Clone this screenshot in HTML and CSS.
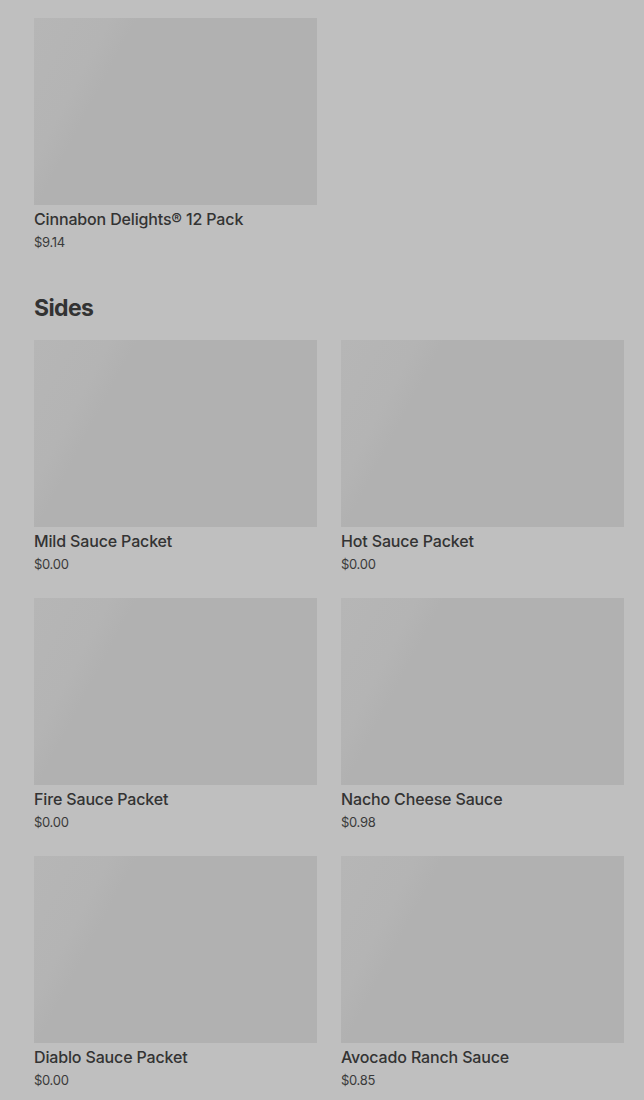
FILE: index.html
```html
<!DOCTYPE html>
<html lang="en">
<head>
<meta charset="utf-8">
<title>Menu</title>
<link rel="stylesheet" href="styles.css">
</head>
<body>
<main class="menu">
  <section class="section">
    <div class="grid">
      <div class="item">
        <div class="thumb"></div>
        <div class="name">Cinnabon Delights® 12 Pack</div>
        <div class="price">$9.14</div>
      </div>
    </div>
  </section>
  <section class="section">
    <h2 class="section-title">Sides</h2>
    <div class="grid">
      <div class="item">
        <div class="thumb"></div>
        <div class="name">Mild Sauce Packet</div>
        <div class="price">$0.00</div>
      </div>
      <div class="item">
        <div class="thumb"></div>
        <div class="name">Hot Sauce Packet</div>
        <div class="price">$0.00</div>
      </div>
      <div class="item">
        <div class="thumb"></div>
        <div class="name">Fire Sauce Packet</div>
        <div class="price">$0.00</div>
      </div>
      <div class="item">
        <div class="thumb"></div>
        <div class="name">Nacho Cheese Sauce</div>
        <div class="price">$0.98</div>
      </div>
      <div class="item">
        <div class="thumb"></div>
        <div class="name">Diablo Sauce Packet</div>
        <div class="price">$0.00</div>
      </div>
      <div class="item">
        <div class="thumb"></div>
        <div class="name">Avocado Ranch Sauce</div>
        <div class="price">$0.85</div>
      </div>
    </div>
  </section>
</main>
</body>
</html>
```
FILE: styles.css
```css
html, body {
  margin: 0;
  padding: 0;
  background: #bfbfbf;
}
body {
  font-family: Inter, "Liberation Sans", Arial, sans-serif;
  color: #333333;
}
.menu {
  padding: 18px 20px 0 34px;
}
.section + .section {
  margin-top: 42px;
}
.section-title {
  margin: 0 0 18px 0;
  font-size: 23px;
  line-height: 28px;
  font-weight: 700;
  letter-spacing: -0.6px;
  color: #333333;
}
.grid {
  display: grid;
  grid-template-columns: 283px 283px;
  column-gap: 24px;
  row-gap: 24px;
}
.item {
  height: 234px;
}
.thumb {
  height: 187px;
  background: linear-gradient(118deg, #b6b6b6 0%, #b4b4b4 20%, #b1b1b1 27%, #b1b1b1 100%);
}
.name {
  margin-top: 4px;
  font-size: 16px;
  line-height: 20px;
  font-weight: 500;
  letter-spacing: -0.15px;
}
.price {
  margin-top: 3px;
  font-size: 13px;
  line-height: 20px;
  font-weight: 400;
  letter-spacing: -0.3px;
  color: #3a3a3a;
}
```
